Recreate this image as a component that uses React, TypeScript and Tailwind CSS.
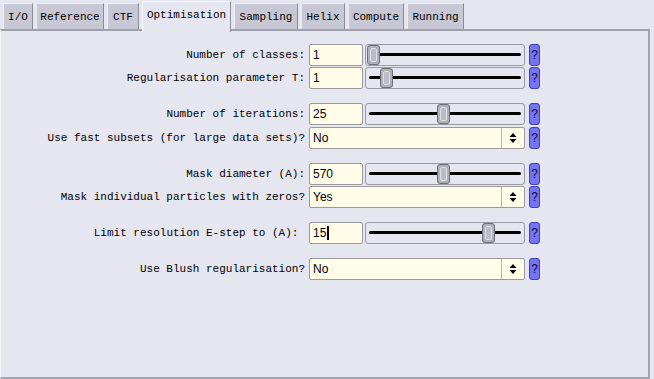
import React from 'react'

// tab strip: fixed widths so the labels sit where the reference has them
const tabs = [
  { label: 'I/O', w: 'w-[30px]' },
  { label: 'Reference', w: 'w-[68px]' },
  { label: 'CTF', w: 'w-[32px]' },
  { label: 'Optimisation', w: 'w-[89px]', active: true },
  { label: 'Sampling', w: 'w-[64px]' },
  { label: 'Helix', w: 'w-[44px]' },
  { label: 'Compute', w: 'w-[56px]' },
  { label: 'Running', w: 'w-[57px]' },
]

type Row =
  | { kind: 'slider'; label: string; value: string; thumb: number; mt: string; cursor?: boolean }
  | { kind: 'choice'; label: string; value: string; mt: string }

const rows: Row[] = [
  { kind: 'slider', label: 'Number of classes:', value: '1', thumb: 1, mt: 'mt-0' },
  { kind: 'slider', label: 'Regularisation parameter T:', value: '1', thumb: 14, mt: 'mt-[1px]' },
  { kind: 'slider', label: 'Number of iterations:', value: '25', thumb: 71, mt: 'mt-[14px]' },
  { kind: 'choice', label: 'Use fast subsets (for large data sets)?', value: 'No', mt: 'mt-[2px]' },
  { kind: 'slider', label: 'Mask diameter (A):', value: '570', thumb: 71, mt: 'mt-[14px]' },
  { kind: 'choice', label: 'Mask individual particles with zeros?', value: 'Yes', mt: 'mt-[1px]' },
  { kind: 'slider', label: 'Limit resolution E-step to (A): ', value: '15', thumb: 116, mt: 'mt-[14px]', cursor: true },
  { kind: 'choice', label: 'Use Blush regularisation?', value: 'No', mt: 'mt-[14px]' },
]

function Help() {
  return (
    <div className="ml-[4px] flex h-[22px] w-[11px] items-center justify-center rounded-[3px] border border-[#4040b4] bg-[#7474f4] font-['Liberation_Sans',sans-serif] text-[12px] leading-none text-[#0c0c34]">
      ?
    </div>
  )
}

function Slider({ value, thumb, cursor }: { value: string; thumb: number; cursor?: boolean }) {
  return (
    <>
      <div className="flex h-[22px] w-[54px] items-center rounded-[2px] border border-[#9a9a9e] bg-[#fffde8] pl-[3px] font-['Liberation_Sans',sans-serif] text-[12px] text-black">
        {value}
        {cursor && <span className="ml-[1px] h-[14px] w-[2px] bg-black" />}
      </div>
      <div className="relative ml-[2px] h-[22px] w-[160px] rounded-[3px] border border-[#9a9aa2]">
        <div className="absolute left-[3px] right-[3px] top-[8px] h-[3px] rounded-full bg-black" />
        <div
          className="absolute top-[0px] h-[20px] w-[13px] rounded-[3px] border border-[#6e6e76] bg-[#b0b0b8] p-[2px]"
          style={{ left: thumb }}
        >
          <div className="h-full w-full rounded-[2px] border border-[#e0e0e6] bg-[#bcbcc4]" />
        </div>
      </div>
    </>
  )
}

function Choice({ value }: { value: string }) {
  return (
    <div className="flex h-[22px] w-[216px] rounded-[2px] border border-[#9a9a9e] bg-[#fffde8]">
      <div className="flex flex-1 items-center pl-[3px] font-['Liberation_Sans',sans-serif] text-[12px] text-black">
        {value}
      </div>
      <div className="flex w-[23px] items-center justify-center border-l border-[#b4b4b4]">
        <svg width="8" height="12" viewBox="0 0 8 12">
          <path d="M4 1 L7.5 5 L0.5 5 Z" fill="#000" />
          <path d="M4 11 L7.5 7 L0.5 7 Z" fill="#000" />
        </svg>
      </div>
    </div>
  )
}

export default function App() {
  return (
    <div className="h-[379px] w-[654px] overflow-hidden bg-[#e6e6f0] font-['Liberation_Mono',monospace] text-[11px] text-black">
      {/* Tabs */}
      <div className="flex h-[29px] items-end gap-[3px] pl-[3px]">
        {tabs.map((t) =>
          t.active ? (
            <div
              key={t.label}
              className={`relative z-10 -mb-[3px] flex h-[31px] items-center justify-center border-l border-r border-t border-l-[#f6f6fa] border-r-[#8c8c96] border-t-[#f6f6fa] bg-[#e6e6f0] pb-[3px] ${t.w}`}
            >
              {t.label}
            </div>
          ) : (
            <div
              key={t.label}
              className={`flex h-[26px] items-center justify-center border-l border-r border-t border-l-[#ececf2] border-r-[#8c8c96] border-t-[#ececf2] bg-[#c8c8d4] pt-[1px] ${t.w}`}
            >
              {t.label}
            </div>
          )
        )}
      </div>

      {/* Panel */}
      <div className="h-[350px] w-[650px] border-b-2 border-l border-r-2 border-t-2 border-b-[#a4a4ae] border-l-[#f4f4f8] border-r-[#a4a4ae] border-t-[#a0a0ac]">
        <div className="flex flex-col pt-[13px]">
          {rows.map((r) => (
            <div key={r.label} className={`flex h-[22px] items-center ${r.mt}`}>
              <div className="w-[304px] whitespace-pre text-right">{r.label}</div>
              <div className="ml-[4px] flex items-center">
                {r.kind === 'slider' ? (
                  <Slider value={r.value} thumb={r.thumb} cursor={r.cursor} />
                ) : (
                  <Choice value={r.value} />
                )}
                <Help />
              </div>
            </div>
          ))}
        </div>
      </div>
    </div>
  )
}
